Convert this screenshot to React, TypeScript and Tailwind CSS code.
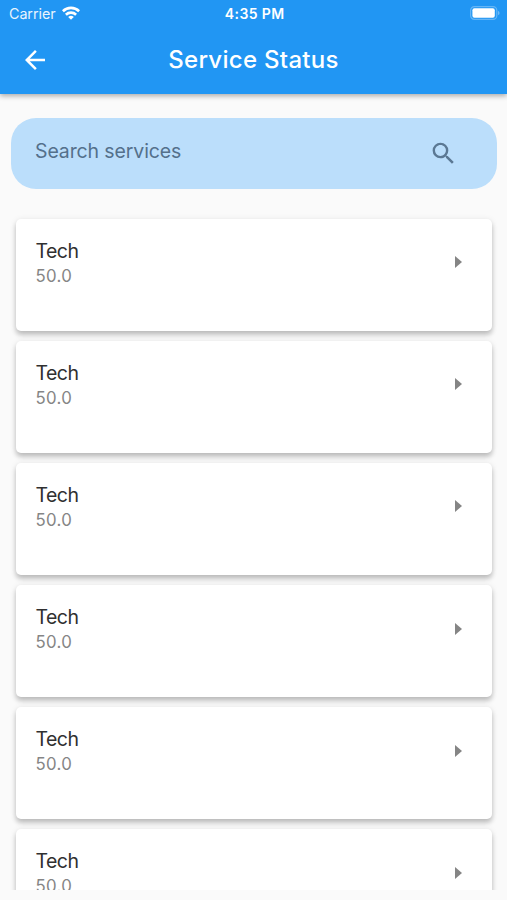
const services = [
  { id: 1, name: "Tech", price: "50.0" },
  { id: 2, name: "Tech", price: "50.0" },
  { id: 3, name: "Tech", price: "50.0" },
  { id: 4, name: "Tech", price: "50.0" },
  { id: 5, name: "Tech", price: "50.0" },
  { id: 6, name: "Tech", price: "50.0" },
];

function WifiIcon() {
  return (
    <svg viewBox="0 0 18 14" className="-mt-[2px] h-[14px] w-[18px]" fill="none" stroke="white" strokeWidth="2.6">
      <path d="M0.9 5.2a11.6 11.6 0 0 1 16.2 0" />
      <path d="M3.9 8.7a7.3 7.3 0 0 1 10.2 0" />
      <path d="M9 13.8 6.2 11a4 4 0 0 1 5.6 0z" fill="white" stroke="none" />
    </svg>
  );
}

function BatteryIcon() {
  return (
    <svg viewBox="0 0 30 14" className="-mt-px h-[14px] w-[30px]">
      <rect x="0.6" y="0.6" width="26.2" height="12.8" rx="3.8" fill="none" stroke="white" strokeOpacity="0.3" strokeWidth="1.2" />
      <rect x="2.4" y="2.3" width="22.4" height="9.4" rx="2" fill="white" />
      <path d="M28 4.9c2 .6 2 3.6 0 4.2z" fill="white" fillOpacity="0.35" />
    </svg>
  );
}

function Header() {
  return (
    <header className="relative z-10 h-[94px] shrink-0 bg-[#2196f3] text-white shadow-[0_2px_5px_rgba(0,0,0,0.32)]">
      <div className="grid h-[27px] grid-cols-3 items-center pr-[6.5px] pl-[9px]">
        <div className="flex items-center gap-[6px]">
          <span className="text-[14.3px] tracking-[-0.05px] opacity-90">Carrier</span>
          <WifiIcon />
        </div>
        <span className="text-center text-[14px] font-semibold tracking-[0.4px]">4:35 PM</span>
        <div className="flex justify-end">
          <BatteryIcon />
        </div>
      </div>
      <div className="grid h-[66px] grid-cols-[70px_1fr_70px] items-center">
        <button aria-label="Back" className="pl-[20px]">
          <svg viewBox="0 0 24 24" className="h-[30px] w-[30px]" fill="white">
            <path d="M20 11H7.83l5.59-5.59L12 4l-8 8 8 8 1.41-1.41L7.83 13H20v-2z" />
          </svg>
        </button>
        <h1 className="text-center text-[24px] font-medium tracking-[0.3px]">Service Status</h1>
      </div>
    </header>
  );
}

function SearchBar() {
  return (
    <div className="mx-[10.5px] mt-[24px] flex h-[71px] shrink-0 items-center justify-between rounded-[25px] bg-[#bbdefb] pr-[39px] pl-[24.5px]">
      <span className="-mt-[3.5px] text-[19.5px] tracking-[-0.12px] text-[#54708b]">Search services</span>
      <svg viewBox="0 0 24 24" className="h-[29px] w-[29px]" fill="#5b7893">
        <path d="M15.5 14h-.79l-.28-.27A6.471 6.471 0 0 0 16 9.5 6.5 6.5 0 1 0 9.5 16c1.61 0 3.09-.59 4.23-1.57l.27.28v.79l5 4.99L20.49 19l-4.99-5zm-6 0C7.01 14 5 11.99 5 9.5S7.01 5 9.5 5 14 7.01 14 9.5 11.99 14 9.5 14z" />
      </svg>
    </div>
  );
}

function ServiceCard(props: { name: string; price: string }) {
  return (
    <li className="flex h-[112.2px] shrink-0 justify-between rounded-[5px] bg-white pr-[30px] pl-[20px] shadow-[0_4px_5px_rgba(0,0,0,0.2),0_1px_6px_rgba(0,0,0,0.1)]">
      <div className="pt-[19px]">
        <div className="text-[19.5px] leading-[26px] tracking-[-0.55px] text-[#303030]">{props.name}</div>
        <div className="text-[16.8px] leading-[24px] tracking-[0.35px] text-[#858585]">{props.price}</div>
      </div>
      <svg viewBox="0 0 7 12" className="mt-[37.5px] h-[12px] w-[7px]" fill="#858585">
        <path d="M0 0v12l7-6z" />
      </svg>
    </li>
  );
}

export default function App() {
  return (
    <div className="flex h-[900px] w-[507px] flex-col overflow-hidden bg-[#fafafa] pb-[10px] font-['Inter',sans-serif]">
      <Header />
      <SearchBar />
      <ul className="mt-[20px] flex min-h-0 flex-1 flex-col gap-[9.9px] overflow-hidden px-[15.5px] pt-[9.8px]">
        {services.map((service) => (
          <ServiceCard key={service.id} name={service.name} price={service.price} />
        ))}
      </ul>
    </div>
  );
}
